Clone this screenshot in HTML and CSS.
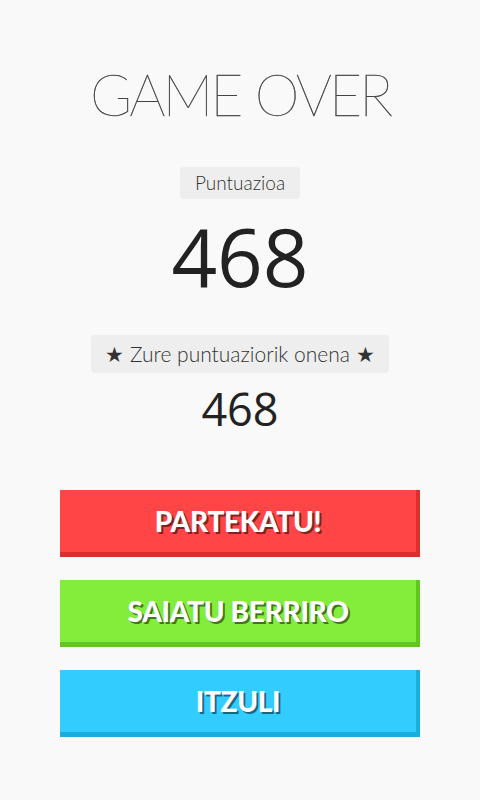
FILE: index.html
```html
<!DOCTYPE html>
<html>
<head>
<meta charset="utf-8">
<link rel="stylesheet" href="styles.css">
</head>
<body>
<main class="screen">
  <h1 class="title">GAME OVER</h1>
  <div class="badge badge-score">Puntuazioa</div>
  <div class="score">468</div>
  <div class="badge badge-best">★ Zure puntuaziorik onena ★</div>
  <div class="best">468</div>
  <div class="buttons">
    <button class="btn btn-red">PARTEKATU!</button>
    <button class="btn btn-green">SAIATU BERRIRO</button>
    <button class="btn btn-blue">ITZULI</button>
  </div>
</main>
</body>
</html>
```
FILE: styles.css
```css
html, body {
  margin: 0;
  padding: 0;
  background: #f9f9f9;
}
.screen {
  width: 480px;
  height: 800px;
  display: flex;
  flex-direction: column;
  align-items: center;
  font-family: "Lato", sans-serif;
}
.title {
  margin: 62px 0 0 0;
  font-family: "Lato", sans-serif;
  font-weight: 100;
  font-size: 57px;
  line-height: 64px;
  letter-spacing: -3px;
  word-spacing: 1px;
  color: #333;
  -webkit-text-stroke: 0.4px #444;
}
.badge {
  background: #eeeeee;
  border-radius: 4px;
  color: #333;
  font-family: "Lato", sans-serif;
  font-weight: 300;
}
.badge-score {
  margin-top: 41px;
  height: 32px;
  line-height: 32px;
  padding: 0 15px;
  font-size: 19px;
}
.score {
  margin-top: 4px;
  font-family: "Open Sans", sans-serif;
  font-size: 80px;
  line-height: 106px;
  color: #222;
}
.badge-best {
  margin-top: 26px;
  height: 38px;
  line-height: 38px;
  padding: 0 14px;
  font-size: 21px;
}
.best {
  margin-top: 6px;
  font-family: "Open Sans", sans-serif;
  font-size: 45px;
  line-height: 60px;
  color: #222;
}
.buttons {
  margin-top: 51px;
  display: flex;
  flex-direction: column;
  gap: 23px;
}
.btn {
  width: 360px;
  height: 67px;
  border: none;
  border-right: 4px solid;
  border-bottom: 5px solid;
  padding: 0;
  margin: 0;
  font-family: "Lato", sans-serif;
  font-weight: 900;
  font-size: 28px;
  letter-spacing: -0.3px;
  color: #fff;
  text-shadow: 2px 2px 0 rgba(0,0,0,0.5);
  box-sizing: border-box;
}
.btn-red {
  background: #ff4545;
  border-color: #dd2e2e;
}
.btn-green {
  background: #84ec3b;
  border-color: #62c620;
}
.btn-blue {
  background: #33ccff;
  border-color: #1aaedd;
}
```
